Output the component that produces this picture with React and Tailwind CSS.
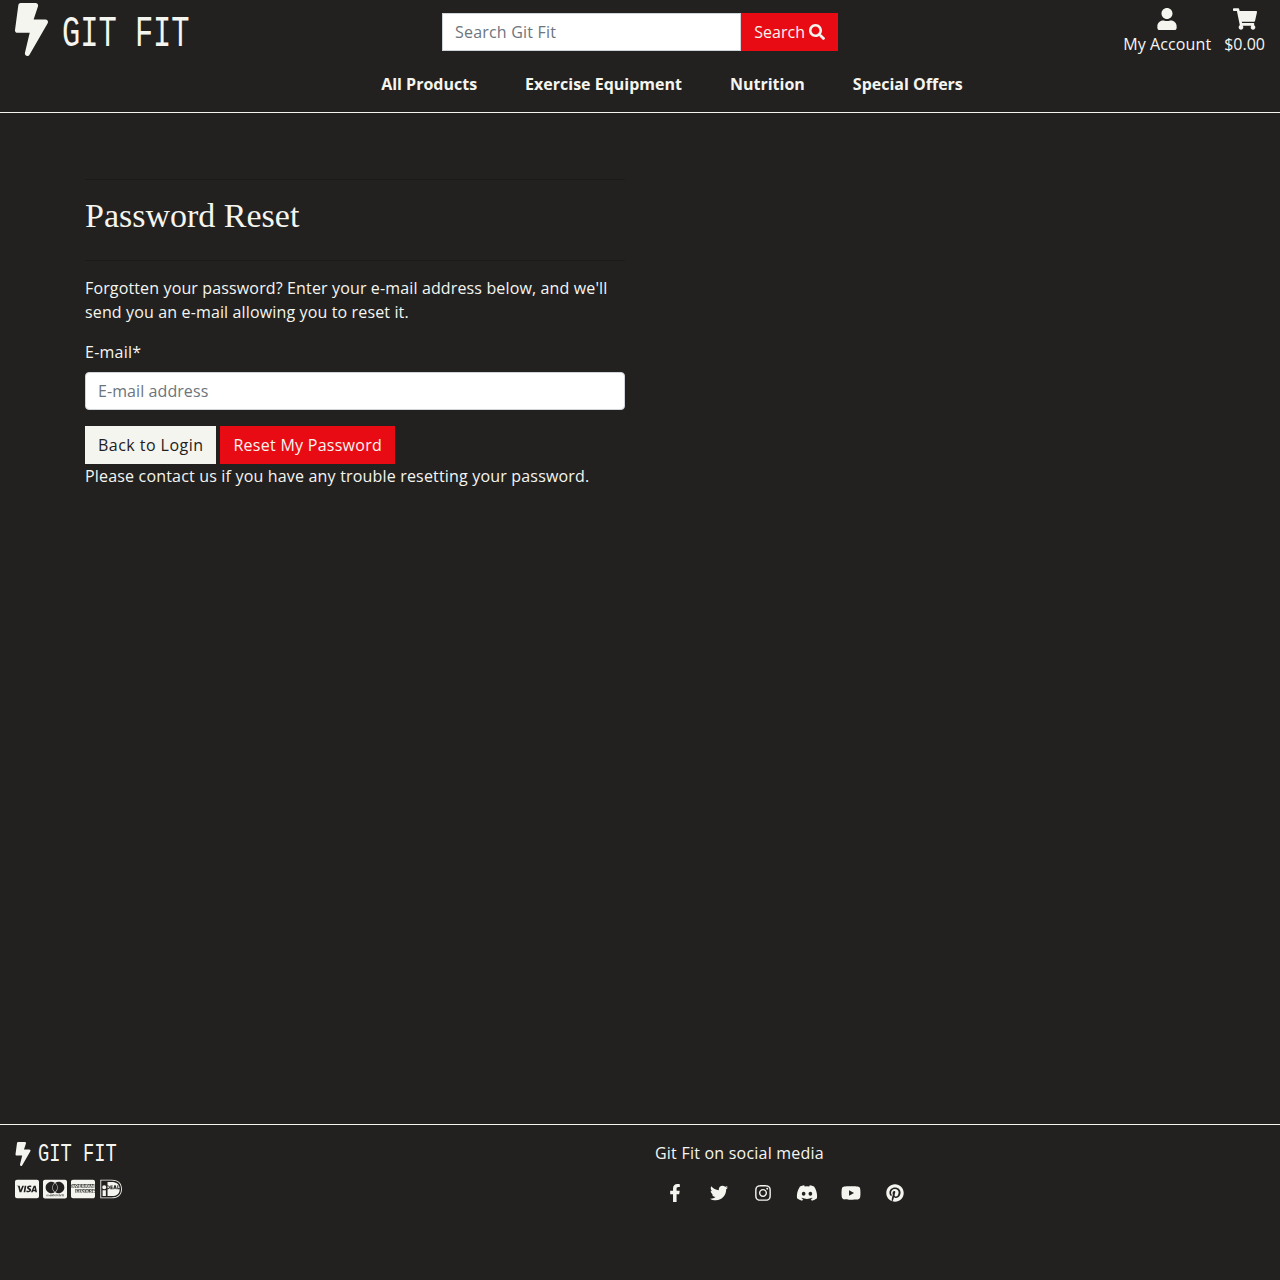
import { FaBolt, FaUser, FaShoppingCart, FaSearch, FaFacebookF, FaTwitter, FaInstagram, FaDiscord, FaYoutube, FaPinterest, FaCcVisa, FaCcMastercard, FaCcAmex, FaIdeal } from "react-icons/fa"

const navLinks = ["All Products", "Exercise Equipment", "Nutrition", "Special Offers"]
const socials = [
  { Icon: FaFacebookF, size: 18 },
  { Icon: FaTwitter, size: 18 },
  { Icon: FaInstagram, size: 18 },
  { Icon: FaDiscord, size: 22 },
  { Icon: FaYoutube, size: 20 },
  { Icon: FaPinterest, size: 18 },
]
const cards = [FaCcVisa, FaCcMastercard, FaCcAmex, FaIdeal]

export default function App() {
  return (
    <div className="flex min-h-[1280px] flex-col bg-[#222120] font-['Open_Sans',sans-serif] text-base leading-6 text-[#f5f5f0]">
      {/* Header */}
      <header className="h-[113px] border-b border-[#f5f5f0]">
        <div className="grid h-16 grid-cols-[1fr_396px_1fr] px-[15px]">
          <a href="#" className="flex items-start gap-[14px] pt-[3px]">
            <FaBolt className="h-[53px] w-[33px]" />
            <span className="mt-[5px] origin-left scale-x-[.69] font-['Liberation_Mono',monospace] text-[44px] leading-[53px]">GIT FIT</span>
          </a>
          <form className="flex pt-[13px]">
            <input
              placeholder="Search Git Fit"
              className="h-[38px] min-w-0 flex-1 border border-[#ced4da] bg-white px-3 tracking-[.2px] text-[#495057] outline-none placeholder:text-[#6c757d]"
            />
            <button type="button" className="flex h-[38px] items-center gap-1 bg-[#e90b13] px-[13px] text-[#f5f5f0]">
              Search <FaSearch size={16} />
            </button>
          </form>
          <div className="flex justify-end gap-[13px] pt-2">
            <a href="#" className="flex flex-col items-center">
              <FaUser className="mb-[2px] h-[22px] w-auto" />
              <span className="tracking-[.1px]">My Account</span>
            </a>
            <a href="#" className="flex flex-col items-center">
              <FaShoppingCart size={24} className="-mt-px mb-px" />
              <span>$0.00</span>
            </a>
          </div>
        </div>
        <nav className="flex justify-center gap-12 pl-[64px] pt-2">
          {navLinks.map((link) => (
            <a key={link} href="#" className="font-bold">
              {link}
            </a>
          ))}
        </nav>
      </header>

      {/* Password reset */}
      <main className="flex-1 px-[85px] pt-[66px]">
        <div className="w-[540px]">
          <hr className="border-t border-[#1c1b1a]" />
          <h1 className="pb-6 pt-4 font-['Liberation_Serif',serif] text-[34px] leading-10">Password Reset</h1>
          <hr className="border-t border-[#1c1b1a]" />
          <p className="mt-[15px] tracking-[.14px]">
            Forgotten your password? Enter your e-mail address below, and we'll send you an e-mail allowing you to reset it.
          </p>
          <label className="mb-2 mt-4 block tracking-[.25px]">E-mail*</label>
          <input
            placeholder="E-mail address"
            className="block h-[38px] w-full rounded border border-[#ced4da] bg-white px-3 tracking-[.08px] text-[#495057] outline-none placeholder:text-[#6c757d]"
          />
          <div className="mt-4 flex gap-1">
            <button type="button" className="h-[38px] bg-[#f5f5f0] px-[13px] tracking-[.46px] text-[#222120]">
              Back to Login
            </button>
            <button type="button" className="h-[38px] bg-[#e90b13] px-[13px] tracking-[.27px] text-[#f5f5f0]">
              Reset My Password
            </button>
          </div>
          <p className="tracking-[.18px]">Please contact us if you have any trouble resetting your password.</p>
        </div>
      </main>

      {/* Footer */}
      <footer className="grid h-[156px] grid-cols-[640px_1fr] border-t border-[#f5f5f0] px-[15px] pt-4">
        <div className="pt-px">
          <a href="#" className="flex items-center gap-[7px]">
            <FaBolt className="h-6 w-[16px]" />
            <span className="origin-left translate-y-px scale-x-[.75] font-['Liberation_Mono',monospace] text-[25px] leading-6">GIT FIT</span>
          </a>
          <div className="mt-[11px] flex gap-1">
            {cards.map((Card, i) => (
              <Card key={i} size={24} />
            ))}
          </div>
        </div>
        <div>
          <p className="tracking-[.22px]">Git Fit on social media</p>
          <div className="mt-4 flex">
            {socials.map(({ Icon, size }, i) => (
              <a key={i} href="#" className="flex h-6 w-11 items-center justify-center pr-1">
                <Icon size={size} />
              </a>
            ))}
          </div>
        </div>
      </footer>
    </div>
  )
}
